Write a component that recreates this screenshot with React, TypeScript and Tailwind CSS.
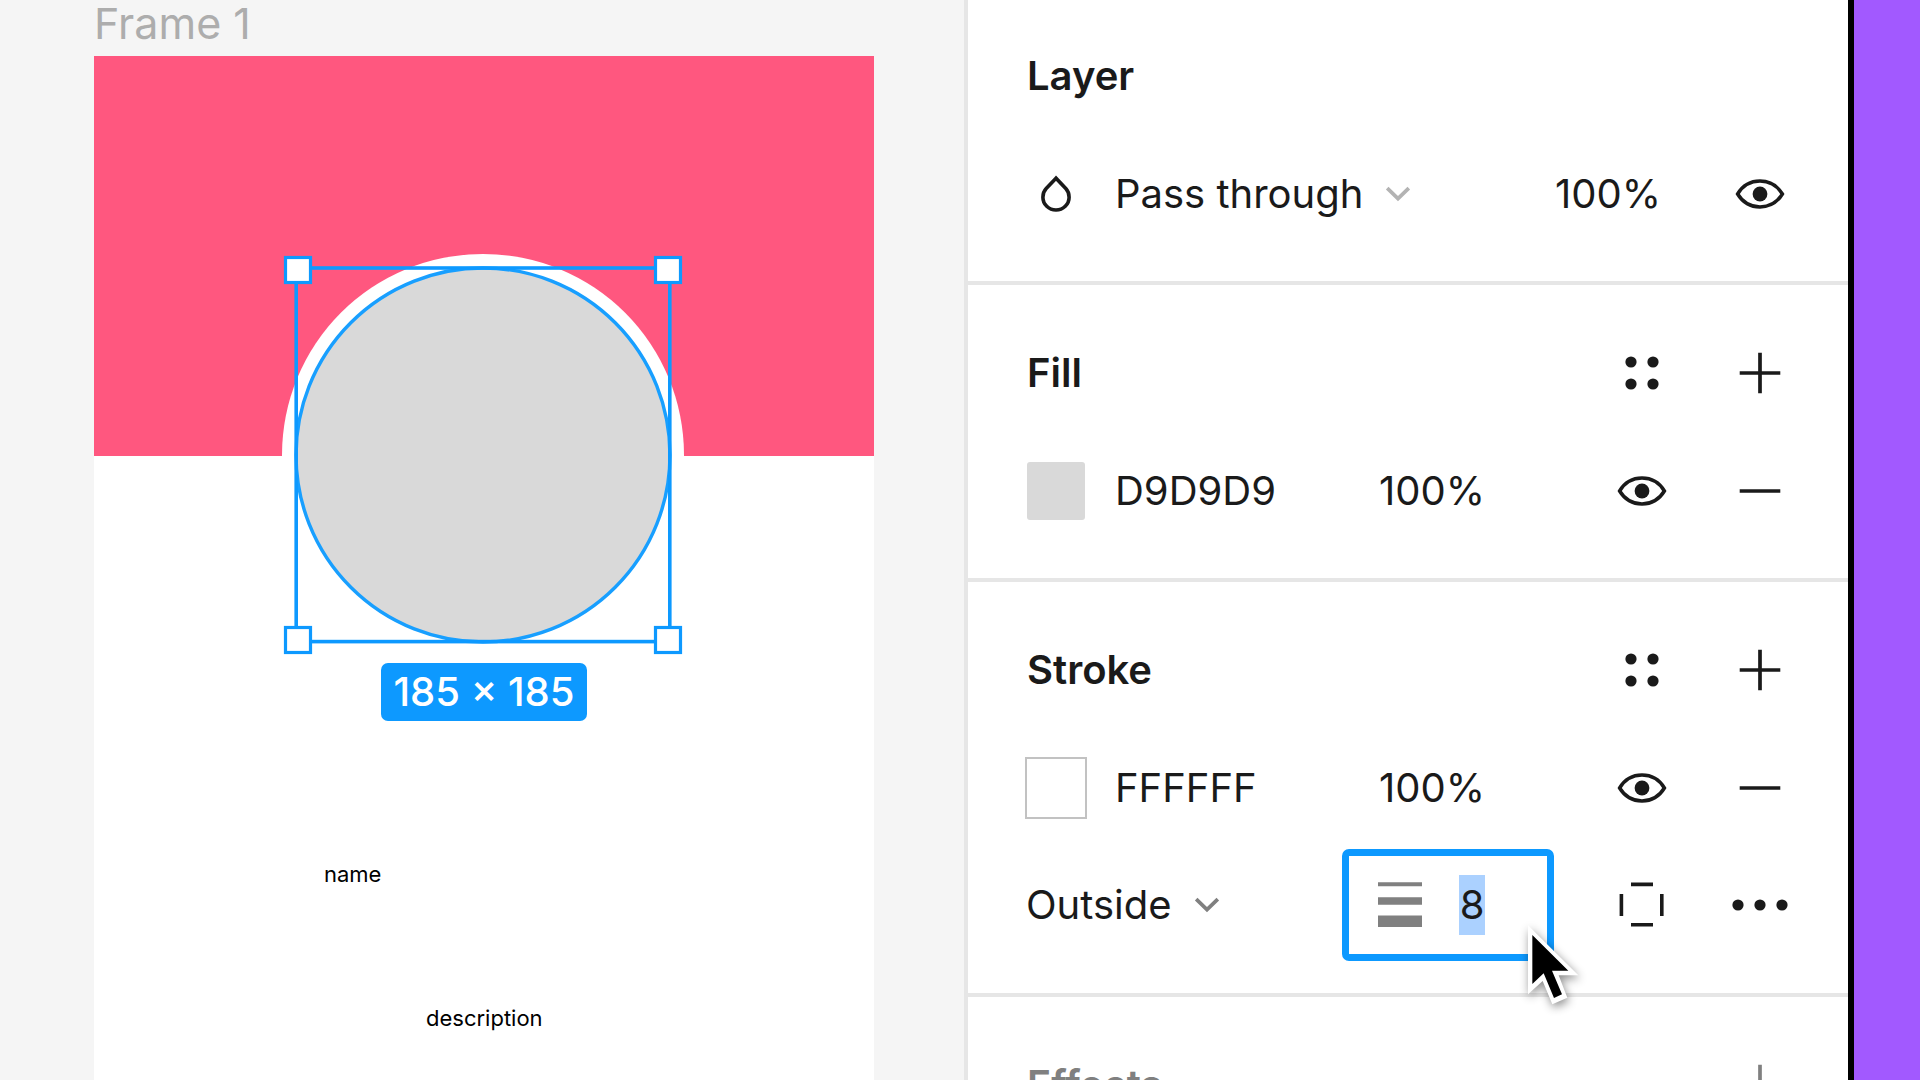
import { useState } from 'react';
import type { ReactNode } from 'react';

function EyeIcon() {
  return (
    <svg className="h-[32px] w-[50px]" viewBox="0 0 50 32" fill="none" aria-hidden="true">
      <path
        d="M2.6 16C8 7.2 16 3.1 25 3.1S42 7.2 47.4 16C42 24.8 34 28.9 25 28.9S8 24.8 2.6 16Z"
        stroke="currentColor"
        strokeWidth="3.5"
      />
      <circle cx="25" cy="16" r="7.4" fill="currentColor" />
    </svg>
  );
}

function PlusIcon() {
  return (
    <svg className="size-[42px]" viewBox="0 0 42 42" aria-hidden="true">
      <path d="M0.7 21H41.3M21 0.7V41.3" stroke="currentColor" strokeWidth="3.7" />
    </svg>
  );
}

function MinusIcon() {
  return (
    <svg className="size-[42px]" viewBox="0 0 42 42" aria-hidden="true">
      <path d="M0.7 21H41.3" stroke="currentColor" strokeWidth="3.7" />
    </svg>
  );
}

function StylesIcon() {
  return (
    <svg className="size-[34px]" viewBox="0 0 34 34" fill="currentColor" aria-hidden="true">
      <circle cx="6" cy="6" r="5.6" />
      <circle cx="28" cy="6" r="5.6" />
      <circle cx="6" cy="28" r="5.6" />
      <circle cx="28" cy="28" r="5.6" />
    </svg>
  );
}

function DropIcon() {
  return (
    <svg className="h-[38px] w-[32px]" viewBox="0 0 32 38" fill="none" aria-hidden="true">
      <path
        d="M16 3.2L6.2 13.6C3.4 16.6 2.9 19.4 2.9 22.2C2.9 29.4 8.8 35 16 35S29.1 29.4 29.1 22.2C29.1 19.4 28.6 16.6 25.8 13.6L16 3.2Z"
        stroke="currentColor"
        strokeWidth="3.6"
      />
    </svg>
  );
}

function ChevronIcon() {
  return (
    <svg className="h-[16px] w-[26px]" viewBox="0 0 26 16" fill="none" aria-hidden="true">
      <path d="M2.2 2.2L13 12.6L23.8 2.2" stroke="currentColor" strokeWidth="3.7" />
    </svg>
  );
}

function WeightIcon() {
  return (
    <svg className="h-[46px] w-[44px]" viewBox="0 0 44 46" fill="#808080" aria-hidden="true">
      <path d="M0 0.3H44V4.3H0ZM0 15.2H44V22.8H0ZM0 33.6H44V45H0Z" />
    </svg>
  );
}

function DashesIcon() {
  return (
    <svg className="size-[46px]" viewBox="0 0 46 46" aria-hidden="true">
      <path
        d="M12 2.4H34M12 42.8H34M2.4 12V34M42.8 12V34"
        stroke="currentColor"
        strokeWidth="3.6"
      />
    </svg>
  );
}

function MoreIcon() {
  return (
    <svg className="h-[12px] w-[56px]" viewBox="0 0 56 12" fill="currentColor" aria-hidden="true">
      <circle cx="6" cy="6" r="5.6" />
      <circle cx="28" cy="6" r="5.6" />
      <circle cx="50" cy="6" r="5.6" />
    </svg>
  );
}

function Pointer() {
  return (
    <svg
      className="pointer-events-none absolute top-[67px] left-[170px] h-[110px] w-[80px]"
      viewBox="0 0 240 330"
      aria-hidden="true"
    >
      <path
        d="M48 28L199 178H140L166 245L121 265L92 195L48 235Z"
        fill="white"
        className="drop-shadow-[4px_10px_14px_rgba(0,0,0,0.45)]"
      />
      <path d="M61 57L169 164H120L150 235L126 246L95 172L61 204Z" fill="black" />
    </svg>
  );
}

function IconButton({ label, children }: { label: string; children: ReactNode }) {
  return (
    <button type="button" aria-label={label} className="flex h-full w-[118px] items-center justify-center">
      {children}
    </button>
  );
}

function Section({ children }: { children: ReactNode }) {
  return <section className="border-b-4 border-[#e6e6e6] py-[29px] pr-[29px] pl-[58px]">{children}</section>;
}

function Header({ title, children }: { title: string; children?: ReactNode }) {
  return (
    <div className="flex h-[118px] items-center">
      <h2 className="flex-1 pl-px font-semibold">{title}</h2>
      {children}
    </div>
  );
}

function Dropdown({ label, options, chevron }: { label: string; options: string[]; chevron: string }) {
  return (
    <label className="flex flex-1 items-center gap-[22px]">
      <select aria-label={label} className="field-sizing-content appearance-none bg-transparent outline-none">
        {options.map((option) => (
          <option key={option}>{option}</option>
        ))}
      </select>
      <span className={chevron}>
        <ChevronIcon />
      </span>
    </label>
  );
}

function PaintRow({ name, hex, swatch }: { name: string; hex: string; swatch: ReactNode }) {
  const [color, setColor] = useState(hex);
  const [opacity, setOpacity] = useState('100%');
  return (
    <div className="flex h-[117px] items-center">
      <div className="flex w-[60px] items-center justify-center">{swatch}</div>
      <input
        aria-label={`${name} color`}
        value={color}
        onChange={(e) => setColor(e.target.value)}
        className="ml-[29px] min-w-0 flex-1 bg-transparent outline-none"
      />
      <input
        aria-label={`${name} opacity`}
        value={opacity}
        onChange={(e) => setOpacity(e.target.value)}
        className="mr-[84px] w-[120px] bg-transparent outline-none"
      />
      <IconButton label={`Hide ${name}`}>
        <EyeIcon />
      </IconButton>
      <IconButton label={`Remove ${name}`}>
        <MinusIcon />
      </IconButton>
    </div>
  );
}

function Selection() {
  const corners = [
    [285.5, 257.5],
    [655.5, 257.5],
    [285.5, 627.5],
    [655.5, 627.5],
  ];
  return (
    <svg
      className="absolute top-[194px] left-[186px] size-[410px]"
      viewBox="280 250 410 410"
      role="img"
      aria-label="Selected ellipse"
    >
      <circle cx="483" cy="455" r="201" fill="white" />
      <circle cx="483" cy="455" r="187" fill="#d9d9d9" stroke="#189fff" strokeWidth="3.4" />
      <rect x="296.2" y="268" width="373.6" height="373.6" fill="none" stroke="#0d99ff" strokeWidth="3.6" />
      {corners.map(([x, y]) => (
        <rect key={`${x}-${y}`} x={x} y={y} width="25" height="25" fill="white" stroke="#0d99ff" strokeWidth="3.2" />
      ))}
    </svg>
  );
}

function Canvas() {
  return (
    <main className="flex min-w-0 flex-1 flex-col bg-[#f5f5f5] pr-[90px] pl-[94px]">
      <div className="flex h-[56px] shrink-0 items-start text-[43px] leading-[46px] text-[#adadad]">Frame 1</div>
      <div className="relative flex-1 bg-white text-[22px] leading-[28px] text-black">
        <div className="h-[400px] bg-[#ff577f]" />
        <Selection />
        <div className="absolute top-[607px] left-[287px] flex h-[58px] w-[206px] items-center justify-center rounded-[7px] bg-[#0d99ff] text-[40px] font-medium text-white">
          185 × 185
        </div>
        <p className="absolute top-[804px] left-[230px]">name</p>
        <p className="absolute top-[948px] left-[332px]">description</p>
      </div>
    </main>
  );
}

function Inspector() {
  const [weight, setWeight] = useState('8');
  const [opacity, setOpacity] = useState('100%');
  return (
    <aside className="w-[884px] shrink-0 overflow-hidden border-l-4 border-[#e6e6e6] bg-white text-[40px] leading-[60px] text-[#1a1a1a]">
      <div className="-mt-[12px]">
        <Section>
          <Header title="Layer" />
          <div className="flex h-[117px] items-center">
            <div className="flex w-[60px] items-center justify-center">
              <DropIcon />
            </div>
            <div className="ml-[29px] flex flex-1">
              <Dropdown
                label="Blend mode"
                options={['Pass through', 'Normal', 'Multiply']}
                chevron="text-[#b3b3b3]"
              />
            </div>
            <input
              aria-label="Layer opacity"
              value={opacity}
              onChange={(e) => setOpacity(e.target.value)}
              className="mr-[26px] w-[120px] bg-transparent outline-none"
            />
            <IconButton label="Hide layer">
              <EyeIcon />
            </IconButton>
          </div>
        </Section>

        <Section>
          <Header title="Fill">
            <IconButton label="Fill styles">
              <StylesIcon />
            </IconButton>
            <IconButton label="Add fill">
              <PlusIcon />
            </IconButton>
          </Header>
          <PaintRow name="fill" hex="D9D9D9" swatch={<div className="size-[58px] rounded-[3px] bg-[#d9d9d9]" />} />
        </Section>

        <Section>
          <Header title="Stroke">
            <IconButton label="Stroke styles">
              <StylesIcon />
            </IconButton>
            <IconButton label="Add stroke">
              <PlusIcon />
            </IconButton>
          </Header>
          <PaintRow
            name="stroke"
            hex="FFFFFF"
            swatch={<div className="size-[62px] shrink-0 border-2 border-[#c2c2c2] bg-white" />}
          />
          <div className="flex h-[118px] items-center">
            <Dropdown label="Stroke position" options={['Outside', 'Inside', 'Center']} chevron="text-[#808080]" />
            <div className="relative z-10 mr-[29px]">
              <label className="flex h-[112px] w-[212px] items-center gap-[37px] rounded-[7px] border-[7px] border-[#0d99ff] pl-[29px]">
                <WeightIcon />
                <input
                  aria-label="Stroke weight"
                  value={weight}
                  onChange={(e) => setWeight(e.target.value)}
                  className="h-[60px] w-[26px] bg-[#abd1ff] text-center outline-none"
                />
              </label>
              <Pointer />
            </div>
            <IconButton label="Stroke per side">
              <DashesIcon />
            </IconButton>
            <IconButton label="Advanced stroke">
              <MoreIcon />
            </IconButton>
          </div>
        </Section>

        <div className="text-[#808080]">
          <Section>
            <Header title="Effects">
              <IconButton label="Add effect">
                <PlusIcon />
              </IconButton>
            </Header>
          </Section>
        </div>
      </div>
    </aside>
  );
}

export default function App() {
  return (
    <div className="flex h-screen overflow-hidden bg-[#a259ff] font-['Inter',sans-serif]">
      <Canvas />
      <Inspector />
      <div className="w-[72px] shrink-0 border-l-[6px] border-black bg-[#a259ff]" />
    </div>
  );
}
